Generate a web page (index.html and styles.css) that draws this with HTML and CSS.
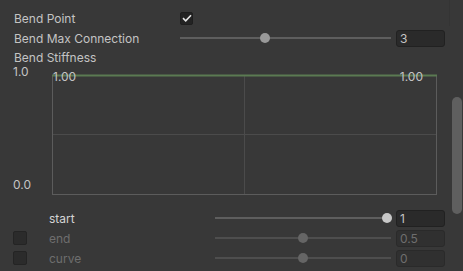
FILE: index.html
```html
<!DOCTYPE html>
<html>
<head>
<meta charset="utf-8">
<link rel="stylesheet" href="styles.css">
</head>
<body>
<div class="inspector">
  <div class="row">
    <span class="label">Bend Point</span>
    <span class="check on"><svg width="10" height="8" viewBox="0 0 10 8"><path d="M1 4.2 L3.7 6.8 L9 1.2" fill="none" stroke="#e6e6e6" stroke-width="1.6"/></svg></span>
  </div>
  <div class="row">
    <span class="label">Bend Max Connection</span>
    <div class="slider"><div class="track"></div><div class="knob" style="left:40.5%"></div></div>
    <span class="field">3</span>
  </div>
  <div class="row short">
    <span class="label">Bend Stiffness</span>
  </div>
  <div class="curve">
    <div class="axis"><span>1.0</span><span>0.0</span></div>
    <div class="graph">
      <svg width="385" height="121" viewBox="0 0 385 121">
        <line x1="0" y1="60.5" x2="384" y2="60.5" stroke="#4b4b4b"/>
        <line x1="192.5" y1="2" x2="192.5" y2="120" stroke="#4b4b4b"/>
        <line x1="0.5" y1="2" x2="0.5" y2="121" stroke="#5c5c5c"/>
        <line x1="384.5" y1="2" x2="384.5" y2="121" stroke="#5c5c5c"/>
        <line x1="0" y1="120.5" x2="385" y2="120.5" stroke="#5c5c5c"/>
        <line x1="0" y1="1.5" x2="385" y2="1.5" stroke="#5b7a52" stroke-width="2"/>
      </svg>
      <span class="val left">1.00</span>
      <span class="val right">1.00</span>
    </div>
  </div>
  <div class="prow">
    <span class="pcheck empty"></span>
    <span class="plabel">start</span>
    <div class="slider"><div class="track"></div><div class="knob bright" style="left:97.5%"></div></div>
    <span class="field">1</span>
  </div>
  <div class="prow disabled">
    <span class="pcheck"></span>
    <span class="plabel">end</span>
    <div class="slider"><div class="track"></div><div class="knob" style="left:50%"></div></div>
    <span class="field">0.5</span>
  </div>
  <div class="prow disabled">
    <span class="pcheck"></span>
    <span class="plabel">curve</span>
    <div class="slider"><div class="track"></div><div class="knob" style="left:50%"></div></div>
    <span class="field">0</span>
  </div>
  <div class="scrollline"></div>
  <div class="scrollthumb"></div>
</div>
</body>
</html>
```
FILE: styles.css
```css
html, body {
  margin: 0;
  padding: 0;
  background: #383838;
  width: 463px;
  height: 271px;
  overflow: hidden;
}
.inspector {
  position: relative;
  font-family: Inter, "Noto Sans", sans-serif;
  font-size: 12px;
  color: #c4c4c4;
  padding: 8px 18px 0 14px;
  box-sizing: border-box;
  width: 463px;
  height: 271px;
}
.row {
  display: flex;
  align-items: center;
  height: 20px;
}
.row.short {
  height: 19px;
}
.label {
  width: 166px;
  flex: none;
  white-space: nowrap;
}
.check {
  width: 13px;
  height: 13px;
  box-sizing: border-box;
  background: #232323;
  border: 1px solid #1e1e1e;
  border-radius: 2px;
  display: flex;
  align-items: center;
  justify-content: center;
}
.slider {
  position: relative;
  flex: 1;
  height: 20px;
  margin-right: 5px;
}
.track {
  position: absolute;
  left: 0;
  right: 0;
  top: 9px;
  height: 2px;
  background: #5e5e5e;
}
.knob {
  position: absolute;
  top: 5px;
  width: 10px;
  height: 10px;
  margin-left: -5px;
  border-radius: 50%;
  background: #999999;
}
.knob.bright {
  background: #c8c8c8;
}
.field {
  width: 49px;
  height: 17px;
  box-sizing: border-box;
  background: #2a2a2a;
  border: 1px solid #212121;
  border-radius: 3px;
  padding-left: 3px;
  line-height: 15px;
  flex: none;
}
.curve {
  display: flex;
  margin-left: -1px;
  margin-top: -1px;
  height: 129px;
}
.axis {
  width: 39px;
  flex: none;
  display: flex;
  flex-direction: column;
  justify-content: space-between;
  line-height: 12px;
  padding: 0 0 4px 0;
}
.graph {
  position: relative;
  width: 385px;
  height: 121px;
  margin-top: 8px;
}
.graph svg {
  display: block;
}
.val {
  position: absolute;
  top: -3px;
  line-height: 12px;
}
.val.left { left: 1px; }
.val.right { right: 14px; }
.prow {
  display: flex;
  align-items: center;
  height: 20px;
  margin-left: -1px;
}
.curve + .prow { margin-top: 13px; }
.pcheck {
  width: 14px;
  height: 14px;
  box-sizing: border-box;
  background: #2b2b2b;
  border: 1px solid #242424;
  border-radius: 2px;
  flex: none;
}
.pcheck.empty {
  visibility: hidden;
}
.plabel {
  width: 166px;
  margin-left: 22px;
  flex: none;
  color: #d4d4d4;
}
.prow.disabled .plabel {
  color: #6e6e6e;
}
.prow.disabled .track {
  background: #4e4e4e;
}
.prow.disabled .knob {
  background: #656565;
}
.prow.disabled .field {
  color: #6e6e6e;
  background: #303030;
  border-color: #2a2a2a;
}
.scrollline {
  position: absolute;
  left: 449px;
  top: 0;
  width: 1px;
  height: 26px;
  background: #343434;
}
.scrollthumb {
  position: absolute;
  left: 452px;
  top: 97px;
  width: 10px;
  height: 117px;
  border-radius: 5px;
  background: #5f5f5f;
}
```
